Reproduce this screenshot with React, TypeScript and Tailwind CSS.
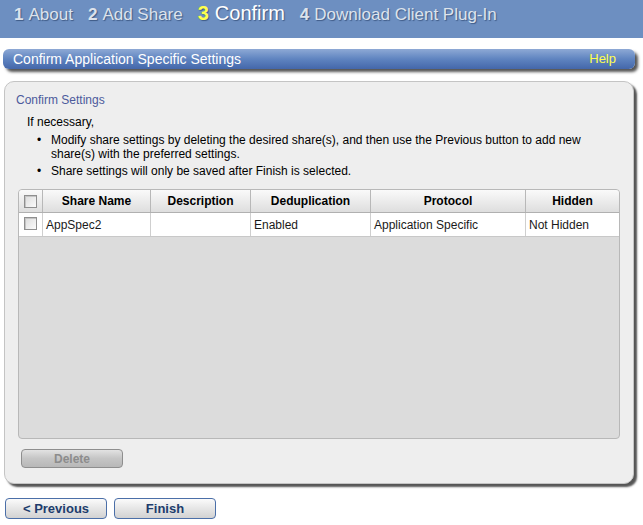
const cols = [
  { label: "Share Name", w: "w-[108px]" },
  { label: "Description", w: "w-[100px]" },
  { label: "Deduplication", w: "w-[120px]" },
  { label: "Protocol", w: "w-[155px]" },
  { label: "Hidden", w: "flex-1" },
]

const row = ["AppSpec2", "", "Enabled", "Application Specific", "Not Hidden"]

function Checkbox() {
  return (
    <span className="block w-[13px] h-[13px] border border-[#8f8f8f] bg-gradient-to-br from-[#dcdcdc] to-[#fbfbfb] shadow-[inset_1px_1px_0_#c4c4c4]" />
  )
}

export default function App() {
  return (
    <div className="w-[643px] h-[525px] bg-white font-['Liberation_Sans',Arial,sans-serif] text-[12px] text-black overflow-hidden">
      {/* wizard steps */}
      <div className="h-[38px] bg-[#6d8fc1] flex items-end pb-[15px] pl-[14px] gap-[15px] [text-shadow:1px_1px_1px_#3e5a86]">
        <span className="text-[#dde3ec] text-[17px] leading-none"><b className="mr-[5px]">1</b>About</span>
        <span className="text-[#dde3ec] text-[17px] leading-none"><b className="mr-[5px]">2</b>Add Share</span>
        <span className="text-white text-[20px] leading-none"><b className="text-[#ffff4d] mr-[6px]">3</b>Confirm</span>
        <span className="text-[#dde3ec] text-[17px] leading-none"><b className="mr-[5px]">4</b>Download Client Plug-In</span>
      </div>

      {/* section header */}
      <div className="mt-[11px] ml-[3px] mr-[8px] h-[20px] rounded-[6px] bg-gradient-to-b from-[#8ea9d5] via-[#5f84c0] to-[#4467aa] shadow-[3px_3px_3px_#555] flex items-center justify-between px-[10px] text-[14px] text-white">
        <span>Confirm Application Specific Settings</span>
        <span className="text-[#ffff4d] text-[13px] mr-[9px]">Help</span>
      </div>

      {/* panel */}
      <div className="mt-[12px] ml-[4px] mr-[9px] h-[403px] rounded-[10px] border border-[#c4c4c4] bg-[#eeeeee] shadow-[3px_3px_2px_#555] pt-[9px] px-[13px] flex flex-col">
        <div className="text-[#4c5a9c] ml-[-2px]">Confirm Settings</div>
        <div className="mt-[4px] ml-[9px]">If necessary,</div>
        <ul className="ml-[19px] mt-[2px] leading-[14px]">
          <li className="flex"><span className="w-[14px]">•</span><span>Modify share settings by deleting the desired share(s), and then use the Previous button to add new<br />share(s) with the preferred settings.</span></li>
          <li className="flex mt-[3px]"><span className="w-[14px]">•</span><span>Share settings will only be saved after Finish is selected.</span></li>
        </ul>

        {/* table */}
        <div className="mt-[11px] h-[250px] rounded-[4px] border border-[#b8b8b8] bg-[#dcdcdc] overflow-hidden flex flex-col">
          <div className="flex h-[23px] bg-gradient-to-b from-[#fafafa] to-[#dedede] border-b border-[#b0b0b0] font-bold">
            <div className="w-[24px] flex items-center justify-center border-r border-[#b8b8b8]"><Checkbox /></div>
            {cols.map((c, i) => (
              <div key={c.label} className={`${c.w} flex items-center justify-center ${i < cols.length - 1 ? "border-r border-[#b8b8b8]" : ""}`}>{c.label}</div>
            ))}
          </div>
          <div className="flex h-[24px] bg-white border-b border-[#c8c8c8] text-[#1a1a1a]">
            <div className="w-[24px] flex justify-center pt-[4px] border-r border-[#cfcfcf]"><Checkbox /></div>
            {cols.map((c, i) => (
              <div key={c.label} className={`${c.w} flex items-center pl-[3px] ${i < cols.length - 1 ? "border-r border-[#cfcfcf]" : ""}`}>{row[i]}</div>
            ))}
          </div>
        </div>

        <button className="mt-[10px] ml-[3px] w-[102px] h-[19px] rounded-[4px] border border-[#8e8e8e] bg-gradient-to-b from-[#e2e2e2] via-[#c5c5c5] to-[#b8b8b8] text-[#8c8c8c] font-bold text-[12px] leading-none">Delete</button>
      </div>

      {/* footer buttons */}
      <div className="mt-[14px] ml-[5px] flex gap-[7px]">
        <button className="w-[102px] h-[21px] rounded-[4px] border border-[#4b6fa8] bg-gradient-to-b from-[#fbfbfb] via-[#e6e6e6] to-[#d2d2d2] text-[#203c6c] font-bold text-[13px] leading-none">&lt; Previous</button>
        <button className="w-[102px] h-[21px] rounded-[4px] border border-[#4b6fa8] bg-gradient-to-b from-[#fbfbfb] via-[#e6e6e6] to-[#d2d2d2] text-[#203c6c] font-bold text-[13px] leading-none">Finish</button>
      </div>
    </div>
  )
}
